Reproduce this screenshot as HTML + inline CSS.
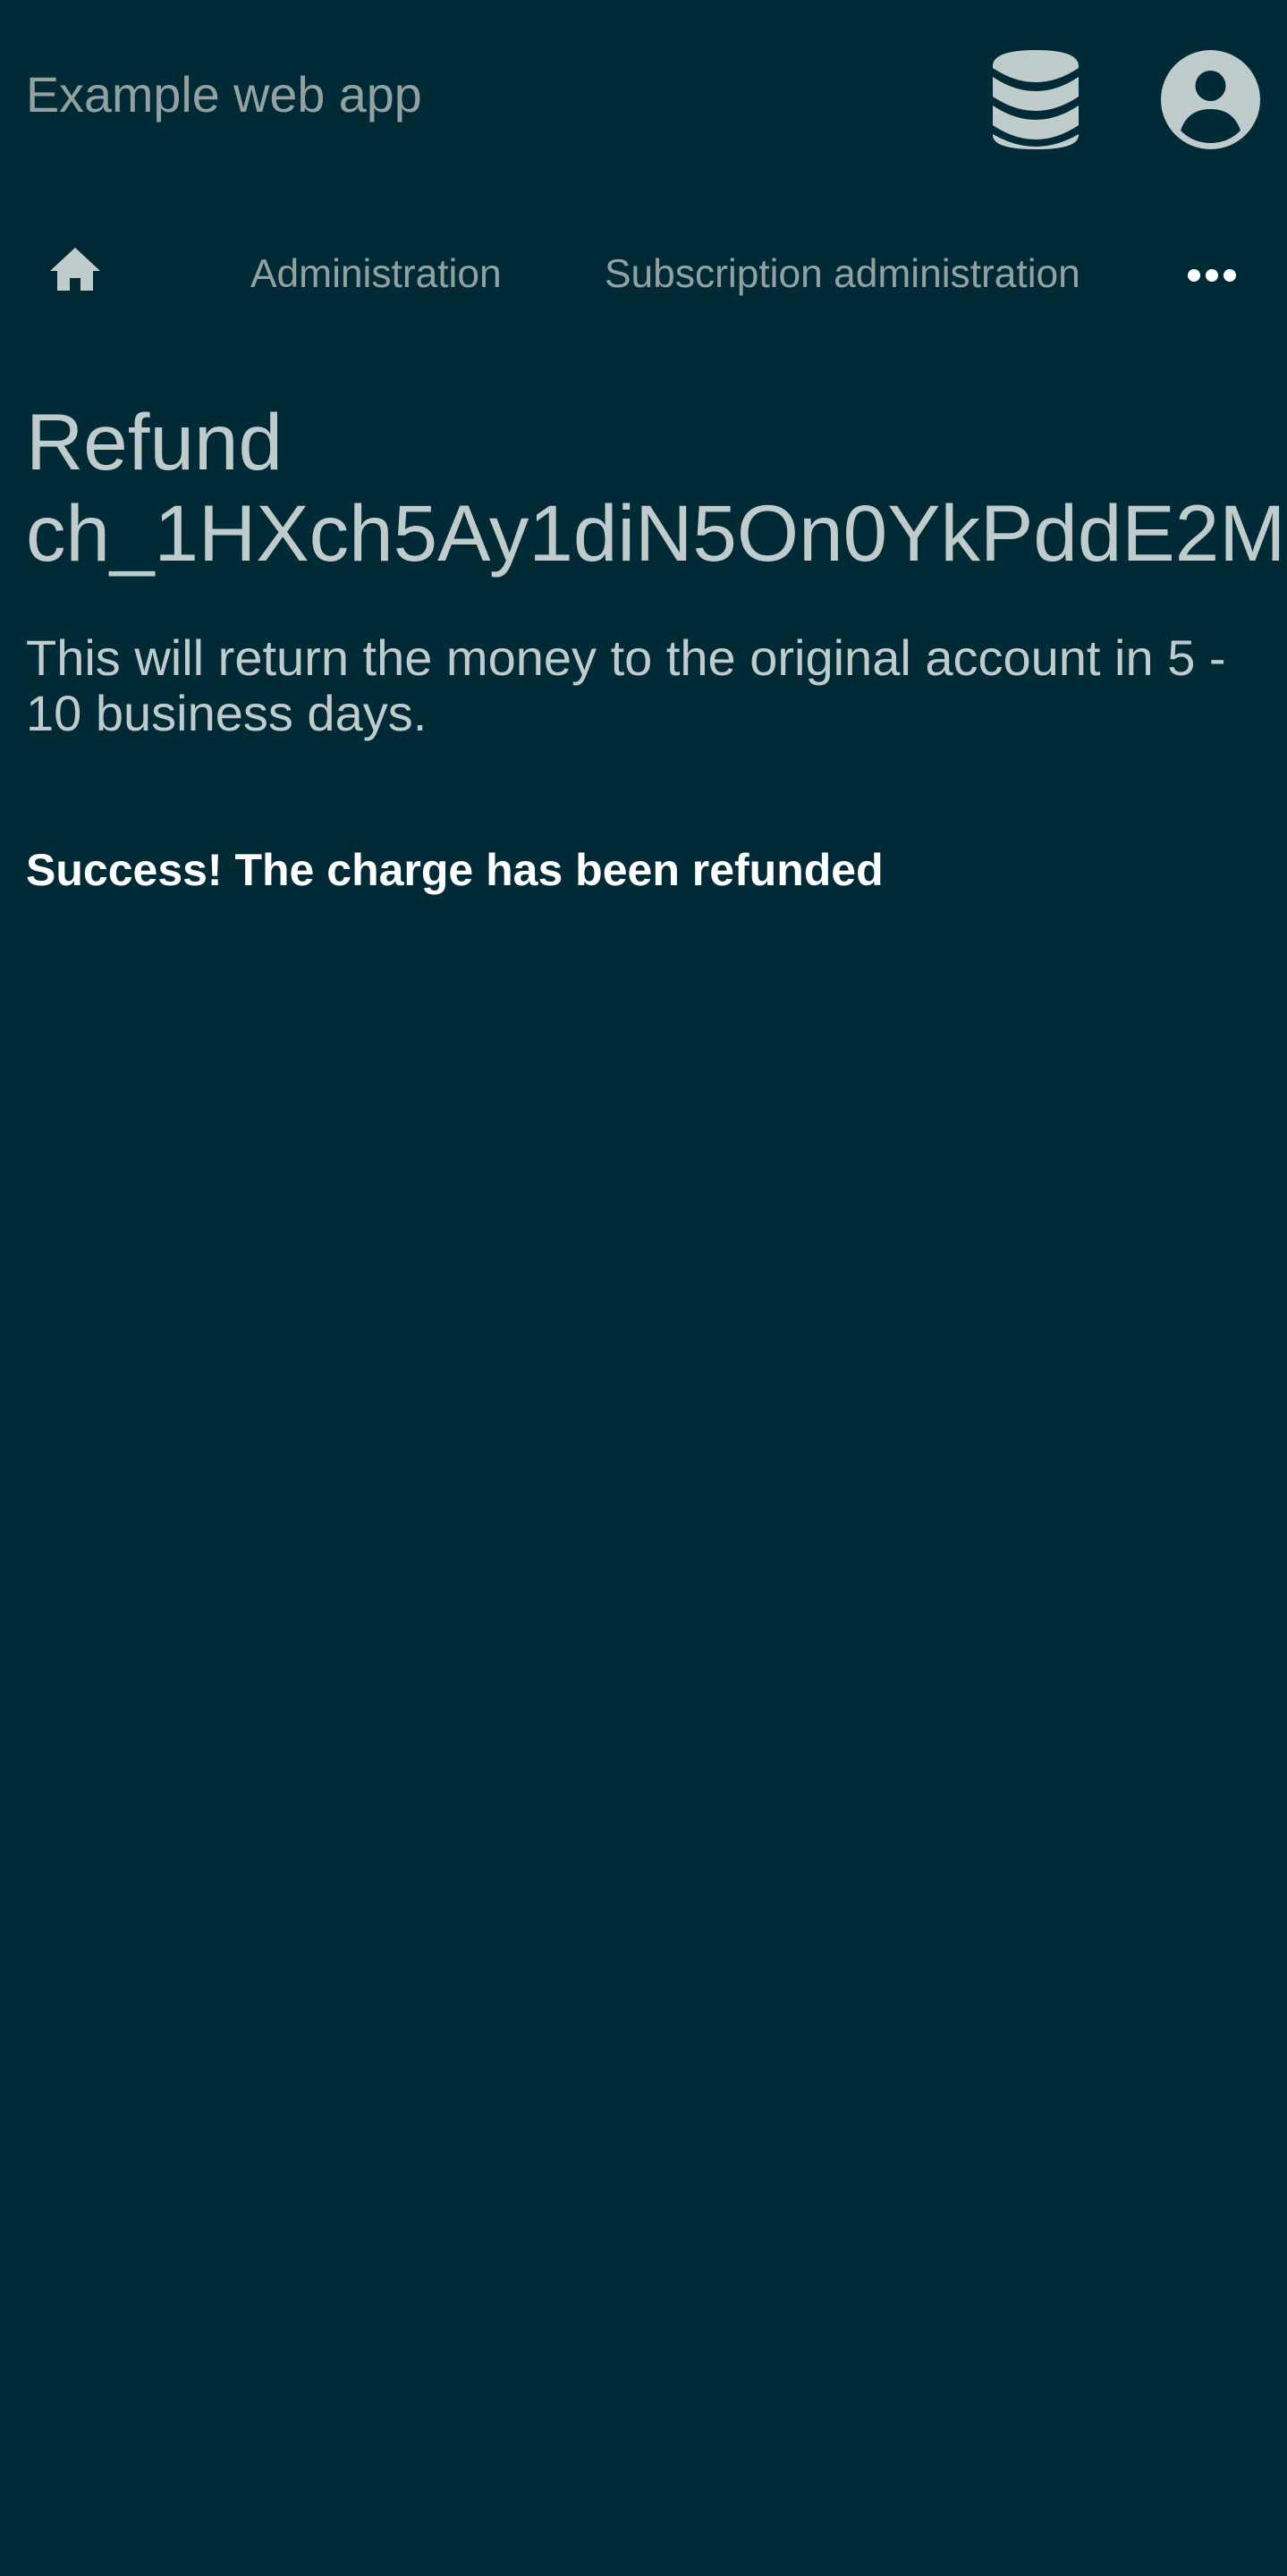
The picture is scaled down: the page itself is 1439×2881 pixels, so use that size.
<!DOCTYPE html>
<html><head><meta charset="utf-8"><style>
html,body{margin:0;padding:0;background:#002b36;width:1439px;height:2881px;overflow:hidden;font-family:"Liberation Sans",Arial,sans-serif}
.a{position:absolute;white-space:nowrap;line-height:1}
</style></head><body>
<div class="a" style="left:29px;top:79px;font-size:55.7px;color:#93a1a1">Example web app</div>
<svg class="a" style="left:1110px;top:56px" width="96" height="111" viewBox="0 0 96 111">
<g fill="#c0cccc">
<path d="M0 18 Q0 0 48 0 Q96 0 96 18 V20 Q48 52 0 20Z"/>
<path d="M0 30 Q48 62 96 30 V52 Q48 84 0 52Z"/>
<path d="M0 62 Q48 94 96 62 V84 Q48 116 0 84Z"/>
<path d="M0 94 Q48 122 96 94 V95 Q96 111 48 111 Q0 111 0 95Z"/>
</g></svg>
<svg class="a" style="left:1298px;top:56px" width="111" height="111" viewBox="0 0 111 111">
<circle cx="55.5" cy="55.5" r="55.5" fill="#c0cccc"/>
<circle cx="55.5" cy="40" r="17" fill="#002b36"/>
<path d="M22 90 Q30 66 55.5 66 Q81 66 89 90 Q75 104 55.5 104 Q36 104 22 90Z" fill="#002b36"/>
</svg>
<svg class="a" style="left:56px;top:277px" width="56" height="48" viewBox="0 0 56 48">
<path d="M28 0 L56 26 H48 V48 H34 V34 H22 V48 H8 V26 H0Z" fill="#c0cccc"/>
</svg>
<div class="a" style="left:280px;top:285px;font-size:44.3px;color:#93a1a1">Administration</div>
<div class="a" style="left:676px;top:285px;font-size:44.3px;color:#93a1a1">Subscription administration</div>
<svg class="a" style="left:1327px;top:299px" width="56" height="18" viewBox="0 0 56 18">
<g fill="#fff"><circle cx="8" cy="9" r="7"/><circle cx="28" cy="9" r="7"/><circle cx="48" cy="9" r="7"/></g></svg>
<div class="a" style="left:29px;top:443px;font-size:89px;line-height:102px;color:#c0cccc">Refund<br>ch_1HXch5Ay1diN5On0YkPddE2M</div>
<div class="a" style="left:29px;top:705px;font-size:56px;line-height:62px;color:#c0cccc">This will return the money to the original account in 5 -<br>10 business days.</div>
<div class="a" style="left:29px;top:948px;font-size:50px;font-weight:bold;color:#fff">Success! The charge has been refunded</div>
</body></html>
